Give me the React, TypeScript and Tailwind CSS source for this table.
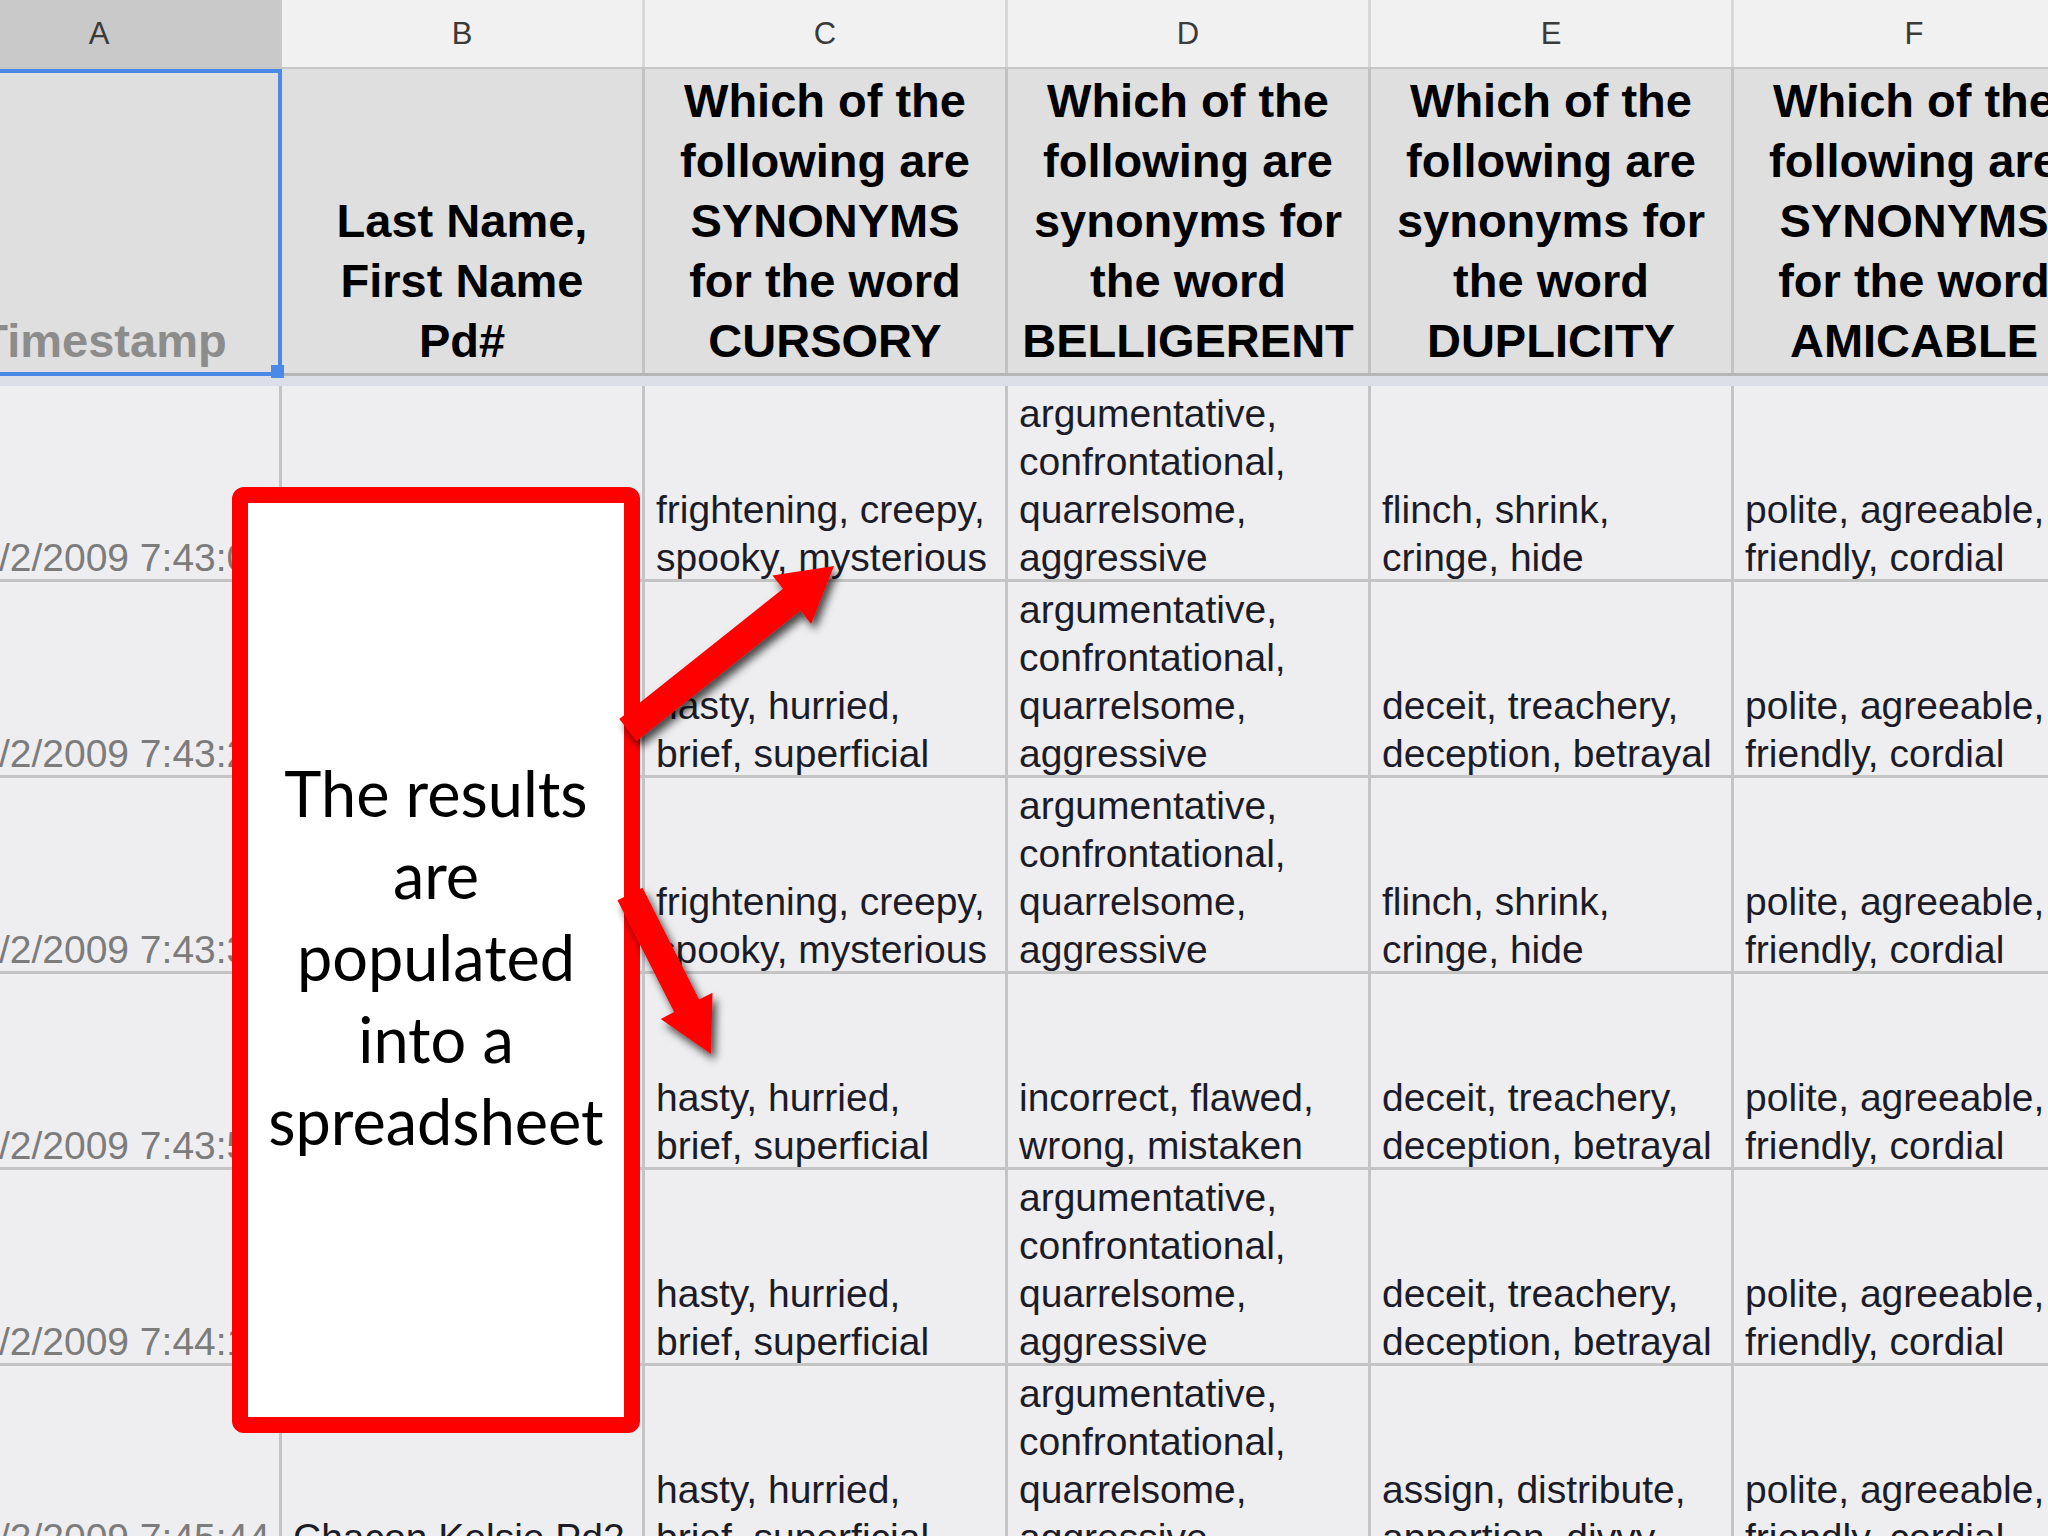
import React from "react";

type Line = { t: string; right?: boolean };

const ARG = ["argumentative,", "confrontational,", "quarrelsome,", "aggressive"];
const HASTY = ["hasty, hurried,", "brief, superficial"];
const FRIGHT = ["frightening, creepy,", "spooky, mysterious"];
const FLINCH = ["flinch, shrink,", "cringe, hide"];
const DECEIT = ["deceit, treachery,", "deception, betrayal"];
const POL = ["polite, agreeable,", "friendly, cordial"];

const L = (arr: string[]): Line[] => arr.map((t) => ({ t }));

type Row = { ts: string; b: Line[]; c: string[]; d: string[]; e: string[]; f: string[] };

const ROWS: Row[] = [
  { ts: "4/2/2009 7:43:08", b: L(["Alvarez, Maria Pd2"]), c: FRIGHT, d: ARG, e: FLINCH, f: POL },
  { ts: "4/2/2009 7:43:21", b: L(["Baker, Tyler Pd2"]), c: HASTY, d: ARG, e: DECEIT, f: POL },
  { ts: "4/2/2009 7:43:37", b: L(["Castro, Ana Pd2"]), c: FRIGHT, d: ARG, e: FLINCH, f: POL },
  { ts: "4/2/2009 7:43:52", b: L(["Diaz, Luis Pd2"]), c: HASTY, d: ["incorrect, flawed,", "wrong, mistaken"], e: DECEIT, f: POL },
  { ts: "4/2/2009 7:44:15", b: [{ t: "Villanueva, Jordan", right: true }, { t: "Pd2" }], c: HASTY, d: ARG, e: DECEIT, f: POL },
  { ts: "4/2/2009 7:45:44", b: L(["Chacon Kelsie Pd2"]), c: HASTY, d: ARG, e: ["assign, distribute,", "apportion, divvy"], f: POL },
];

const HEADERS: string[][] = [
  ["Last Name,", "First Name", "Pd#"],
  ["Which of the", "following are", "SYNONYMS", "for the word", "CURSORY"],
  ["Which of the", "following are", "synonyms for", "the word", "BELLIGERENT"],
  ["Which of the", "following are", "synonyms for", "the word", "DUPLICITY"],
  ["Which of the", "following are", "SYNONYMS", "for the word", "AMICABLE"],
];

const LETTERS = ["A", "B", "C", "D", "E", "F"];

function arrowPoints(x1: number, y1: number, x2: number, y2: number, sw: number, hw: number, hl: number) {
  const dx = x2 - x1;
  const dy = y2 - y1;
  const len = Math.hypot(dx, dy);
  const ux = dx / len;
  const uy = dy / len;
  const px = -uy;
  const py = ux;
  const bx = x2 - ux * hl;
  const by = y2 - uy * hl;
  const pts = [
    [x1 + (px * sw) / 2, y1 + (py * sw) / 2],
    [bx + (px * sw) / 2, by + (py * sw) / 2],
    [bx + (px * hw) / 2, by + (py * hw) / 2],
    [x2, y2],
    [bx - (px * hw) / 2, by - (py * hw) / 2],
    [bx - (px * sw) / 2, by - (py * sw) / 2],
    [x1 - (px * sw) / 2, y1 - (py * sw) / 2],
  ];
  return pts.map((p) => `${p[0].toFixed(1)},${p[1].toFixed(1)}`).join(" ");
}

function DataCell({ lines }: { lines: Line[] }) {
  return (
    <div className="w-[363px] shrink-0 h-full border-r-[3px] border-[#c4c4c4] flex flex-col justify-end overflow-hidden pl-[11px] pr-[3px] text-[39px] leading-[48px] whitespace-nowrap text-[#1c1c28]">
      <div className="-mb-[3px]">
        {lines.map((l, i) => (
          <div key={i} className={l.right ? "text-right" : "text-left"}>
            {l.t}
          </div>
        ))}
      </div>
    </div>
  );
}

export default function App() {
  return (
    <div className="relative w-[2048px] h-[1536px] overflow-hidden bg-[#eeeef0] font-['Liberation_Sans',Arial,sans-serif]">
      <div className="-ml-[81px] w-[2178px]">
        {/* column letters */}
        <div className="flex h-[69px] border-b-[2px] border-[#c6c6c6]">
          {LETTERS.map((l, i) => (
            <div
              key={l}
              className={`w-[363px] shrink-0 h-full border-r-[3px] flex items-center justify-center pt-[2px] text-[31px] text-[#3a3a3a] ${
                i === 0 ? "bg-[#c9c9c9] border-[#c9c9c9]" : "bg-[#f1f1f1] border-[#d8d8d8]"
              }`}
            >
              {l}
            </div>
          ))}
        </div>

        {/* header row */}
        <div className="flex h-[307px] border-b-[3px] border-[#b5b5b5] bg-[#dfdfdf]">
          <div className="relative w-[363px] shrink-0 h-full border-r-[3px] border-[#c2c2c2] flex flex-col justify-end items-center pb-[2px] text-[47px] leading-[60px] font-bold text-[#8c8c8c] whitespace-nowrap">
            <div className="pl-[8px]">Timestamp</div>
            <div className="absolute top-0 left-0 -right-[3px] -bottom-[3px] border-[4px] border-[#4a89e8]">
              <div className="absolute -right-[6px] -bottom-[6px] w-[13px] h-[13px] bg-[#4a89e8]" />
            </div>
          </div>
          {HEADERS.map((h, i) => (
            <div
              key={i}
              className="w-[363px] shrink-0 h-full border-r-[3px] border-[#c2c2c2] flex flex-col justify-end items-center pb-[2px] text-[47px] leading-[60px] font-bold text-black whitespace-nowrap text-center"
            >
              {h.map((t, j) => (
                <div key={j}>{t}</div>
              ))}
            </div>
          ))}
        </div>

        {/* frozen divider band */}
        <div className="h-[10px] bg-[#dcdee8]" />

        {/* data rows */}
        {ROWS.map((r, i) => (
          <div key={i} className="flex h-[196px] border-b-[3px] border-[#c4c4c4]">
            <div className="w-[363px] shrink-0 h-full border-r-[3px] border-[#c4c4c4] flex flex-col justify-end items-end overflow-hidden pr-[9px] text-[39px] leading-[48px] whitespace-nowrap text-[#7c7c7c]">
              <div className="-mb-[3px]">{r.ts}</div>
            </div>
            <DataCell lines={r.b} />
            <DataCell lines={L(r.c)} />
            <DataCell lines={L(r.d)} />
            <DataCell lines={L(r.e)} />
            <DataCell lines={L(r.f)} />
          </div>
        ))}
      </div>

      {/* callout */}
      <div className="absolute left-[232px] top-[487px] w-[408px] h-[946px] border-[16px] border-[#ff0000] rounded-[12px] bg-white flex flex-col items-center justify-center text-center text-[63px] leading-[82px] text-black font-['Lato',sans-serif] pb-[6px]">
        <div>The results</div>
        <div>are</div>
        <div>populated</div>
        <div>into a</div>
        <div>spreadsheet</div>
      </div>

      {/* arrows */}
      <svg
        className="absolute left-0 top-0 pointer-events-none"
        width={2048}
        height={1536}
        viewBox="0 0 2048 1536"
      >
        <defs>
          <filter id="sh" x="-20%" y="-20%" width="140%" height="140%">
            <feDropShadow dx="4" dy="6" stdDeviation="4" floodColor="#000" floodOpacity="0.7" />
          </filter>
        </defs>
        <polygon points={arrowPoints(628, 730, 834, 566, 28, 62, 54)} fill="#ff0000" filter="url(#sh)" />
        <polygon points={arrowPoints(630, 894, 711, 1054, 28, 58, 54)} fill="#ff0000" filter="url(#sh)" />
      </svg>
    </div>
  );
}
